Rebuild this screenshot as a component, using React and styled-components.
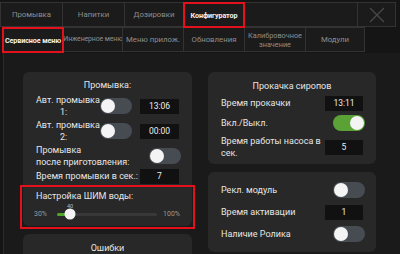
import styled, { createGlobalStyle } from 'styled-components';

const GlobalStyle = createGlobalStyle`
  body {
    margin: 0;
    background: #151515;
  }
`;

export default function App() {
  return (
    <>
      <GlobalStyle />
      <Page>
        <TabRow>
          <Tab $w={63}>Промывка</Tab>
          <Tab $w={63}>Напитки</Tab>
          <Tab $w={60}>Дозировки</Tab>
          <Tab $w={62} $active $marked>Конфигуратор</Tab>
          <Tab $w={114} />
          <Tab $w={39}>
            <svg width="16" height="16" viewBox="0 0 16 16">
              <path d="M1 1L15 15M15 1L1 15" stroke="#4a4a4a" strokeWidth="1.2" />
            </svg>
          </Tab>
        </TabRow>
        <SubRow>
          <Tab $w={62} $active $marked>Сервисное меню</Tab>
          <Tab $w={60} $tight>Инженерное меню</Tab>
          <Tab $w={62}>Меню прилож.</Tab>
          <Tab $w={62}>Обновления</Tab>
          <Tab $w={62} $small>Калибровочное<br />значение</Tab>
          <Tab $w={60}>Модули</Tab>
        </SubRow>

        <Content>
          <Column>
            <Card $pt={7}>
              <Title>Промывка:</Title>
              <Rows>
                <GridRow>
                  <CenterLabel>Авт. промывка<br />1:</CenterLabel>
                  <Toggle />
                  <Field>13:06</Field>
                </GridRow>
                <GridRow>
                  <CenterLabel>Авт. промывка<br />2:</CenterLabel>
                  <Toggle />
                  <Field>00:00</Field>
                </GridRow>
                <Row $h={24}>
                  <Label>Промывка<br />после приготовления:</Label>
                  <Toggle $edge />
                </Row>
                <Row $h={14}>
                  <Label>Время промывки в сек.:</Label>
                  <Field>7</Field>
                </Row>
              </Rows>
              <PwmSection>
                <Label>Настройка ШИМ воды:</Label>
                <SliderRow>
                  <Pct>30%</Pct>
                  <Track>
                    <Fill style={{ width: '13%' }} />
                    <Knob style={{ left: '13%' }}>
                      <KnobValue>40</KnobValue>
                    </Knob>
                  </Track>
                  <Pct $right>100%</Pct>
                </SliderRow>
              </PwmSection>
            </Card>
            <Card $pt={8}>
              <Title>Ошибки</Title>
              <Spacer />
            </Card>
          </Column>

          <Column>
            <Card $pt={8} $pb={5}>
              <Title>Прокачка сиропов</Title>
              <Rows $gap={4}>
                <Row $h={16}>
                  <Label>Время прокачки</Label>
                  <Field $w={38}>13:11</Field>
                </Row>
                <Row $h={16}>
                  <Label>Вкл./Выкл.</Label>
                  <Toggle $on $edge />
                </Row>
                <Row $h={24}>
                  <Label>Время работы насоса в<br />сек.</Label>
                  <Field $w={38}>5</Field>
                </Row>
              </Rows>
            </Card>
            <Card $pt={10} $pb={10}>
              <Rows $gap={6}>
                <Row $h={16}>
                  <Label>Рекл. модуль</Label>
                  <Toggle $edge />
                </Row>
                <Row $h={16}>
                  <Label>Время активации</Label>
                  <Field $w={38}>1</Field>
                </Row>
                <Row $h={16}>
                  <Label>Наличие Ролика</Label>
                  <Toggle $edge />
                </Row>
              </Rows>
            </Card>
          </Column>
        </Content>
      </Page>
    </>
  );
}

function Toggle({ $on, $edge }) {
  return (
    <Switch $on={$on} $edge={$edge}>
      <SwitchKnob />
    </Switch>
  );
}

const Page = styled.div`
  width: 400px;
  height: 254px;
  overflow: hidden;
  background: #151515;
  font-family: Roboto, 'Liberation Sans', sans-serif;
  color: #e6e6e6;
`;

const TabRow = styled.div`
  display: flex;
  padding-top: 2px;
`;

const SubRow = styled.div`
  display: flex;
  padding-left: 2px;
  margin-top: -1px;
`;

const Tab = styled.div`
  box-sizing: border-box;
  width: ${(p) => p.$w}px;
  height: ${(p) => (p.$active ? 26 : 25)}px;
  margin-left: -1px;
  &:first-child {
    margin-left: 0;
  }
  display: flex;
  align-items: center;
  justify-content: center;
  text-align: center;
  overflow: hidden;
  border: 1px solid #333;
  background: #1b1b1b;
  color: ${(p) => (p.$active ? '#f2f2f2' : '#8e8e8e')};
  font-weight: ${(p) => (p.$active ? 700 : 400)};
  font-size: ${(p) => (p.$active ? 7.2 : p.$small ? 7.3 : p.$tight ? 6.9 : 7.8)}px;
  letter-spacing: ${(p) => (p.$active || p.$tight ? '-0.1px' : 'normal')};
  line-height: 9px;
  white-space: nowrap;
  outline: ${(p) => (p.$marked ? '2px solid #e3111b' : 'none')};
  outline-offset: -2px;
  position: relative;
  z-index: ${(p) => (p.$marked ? 1 : 0)};
`;

const Content = styled.div`
  height: 202px;
  margin-left: 3px;
  border-left: 1px solid #2c2c2c;
  background: #1a1a1a;
  padding: 19px 0 0 19px;
  display: grid;
  grid-template-columns: 169px 168px;
  column-gap: 16px;
  align-items: start;
`;

const Column = styled.div`
  display: flex;
  flex-direction: column;
  gap: 8px;
`;

const Card = styled.div`
  background: #282828;
  border-radius: 6px;
  padding: ${(p) => p.$pt || 0}px 13px ${(p) => p.$pb || 0}px;
`;

const Title = styled.div`
  text-align: center;
  font-size: 9px;
  line-height: 12px;
  margin-bottom: 3px;
`;

const Rows = styled.div`
  display: flex;
  flex-direction: column;
  gap: ${(p) => (p.$gap === undefined ? 1 : p.$gap)}px;
`;

const GridRow = styled.div`
  display: grid;
  grid-template-columns: 64px 40px 39px;
  align-items: center;
  height: 24px;
`;

const Row = styled.div`
  display: flex;
  align-items: center;
  justify-content: space-between;
  height: ${(p) => p.$h}px;
`;

const Label = styled.div`
  font-size: 9px;
  line-height: 12px;
  color: #e6e6e6;
  white-space: nowrap;
`;

const CenterLabel = styled(Label)`
  text-align: center;
  padding-right: 9px;
`;

const Field = styled.div`
  box-sizing: border-box;
  width: ${(p) => p.$w || 39}px;
  height: 15px;
  background: #111;
  color: #eee;
  font-size: 8.5px;
  display: flex;
  align-items: center;
  justify-content: center;
`;

const Switch = styled.div`
  box-sizing: border-box;
  width: 32px;
  height: 16px;
  border-radius: 8px;
  padding: 1px;
  display: flex;
  justify-content: ${(p) => (p.$on ? 'flex-end' : 'flex-start')};
  background: ${(p) => (p.$on ? '#5ba236' : '#474c53')};
  margin-right: ${(p) => (p.$edge ? -2 : 0)}px;
`;

const SwitchKnob = styled.div`
  width: 14px;
  height: 14px;
  border-radius: 50%;
  background: #f4f4f4;
`;

const PwmSection = styled.div`
  margin: 5px -13px 0;
  padding: 2px 13px 6px;
  outline: 2px solid #e3111b;
  outline-offset: 1px;
`;

const SliderRow = styled.div`
  display: flex;
  align-items: center;
  height: 12px;
  margin: 6px -1px 0 -2px;
`;

const Pct = styled.div`
  width: 23px;
  font-size: 7px;
  color: #9a9a9a;
  text-align: ${(p) => (p.$right ? 'right' : 'left')};
`;

const Track = styled.div`
  position: relative;
  flex: 1;
  height: 3px;
  border-radius: 2px;
  background: #383838;
`;

const Fill = styled.div`
  height: 100%;
  border-radius: 2px;
  background: #4fa52c;
`;

const Knob = styled.div`
  position: absolute;
  top: 50%;
  width: 11px;
  height: 11px;
  border-radius: 50%;
  background: #f4f4f4;
  transform: translate(-50%, -50%);
`;

const KnobValue = styled.span`
  position: absolute;
  bottom: 11px;
  left: 50%;
  transform: translateX(-50%);
  font-size: 5.5px;
  color: #bbb;
`;

const Spacer = styled.div`
  height: 30px;
`;
